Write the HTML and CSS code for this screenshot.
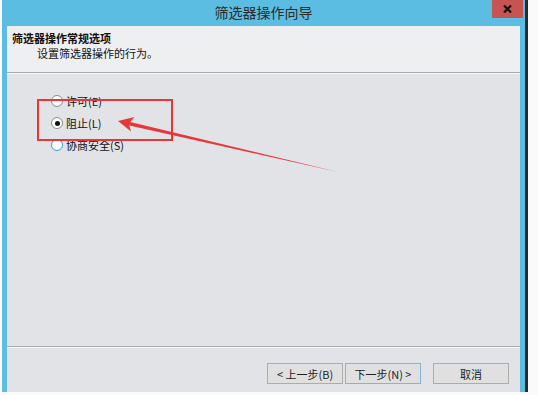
FILE: index.html
```html
<!DOCTYPE html>
<html lang="zh-CN">
<head>
    <meta charset="UTF-8">
    <title>筛选器操作向导</title>
    <link rel="stylesheet" href="styles.css">
</head>
<body>
    <div class="window">
        <div class="titlebar">
            <span class="title">筛选器操作向导</span>
            <div class="close">
                <svg width="9" height="8" viewBox="0 0 9 8"><path d="M1 0.5 L8 7.5 M8 0.5 L1 7.5" stroke="#111" stroke-width="2.2"/></svg>
            </div>
        </div>
        <div class="content">
            <div class="header">
                <div class="header-title">筛选器操作常规选项</div>
                <div class="header-sub">设置筛选器操作的行为。</div>
            </div>
            <div class="options">
                <label class="radio"><span class="dot"></span>许可(E)</label>
                <label class="radio checked"><span class="dot"></span>阻止(L)</label>
                <label class="radio hover"><span class="dot"></span>协商安全(S)</label>
            </div>
            <div class="footer">
                <button class="btn">&lt; 上一步(B)</button>
                <button class="btn default">下一步(N) &gt;</button>
                <button class="btn cancel">取消</button>
            </div>
        </div>
    </div>
    <svg class="mark" width="538" height="395" viewBox="0 0 538 395">
        <rect x="38" y="100" width="134" height="40" fill="none" stroke="#e8373b" stroke-width="2"/>
        <polygon points="118,121 134.5,117 130.2,121.9 338,172 129.3,125.6 131,131.5" fill="#e8373b"/>
    </svg>
</body>
</html>
```

FILE: styles.css
```css
body { margin: 0; width: 538px; height: 395px; background: #fafafa; position: relative; overflow: hidden; font-family: "Noto Sans CJK SC", "DejaVu Sans", sans-serif; color: #111; }
.window { margin-left: 2px; width: 523px; height: 392px; box-sizing: border-box; padding: 0 5px 0 5px; background: #5bbde1; box-shadow: 3px 0 0 #2a2a2a; display: flex; flex-direction: column; }
.titlebar { height: 26px; position: relative; display: flex; align-items: center; justify-content: center; }
.title { font-size: 14px; color: #2b2b2b; margin-top: -2px; }
.close { position: absolute; top: 0; right: -3px; width: 31px; height: 18px; background: #c75352; display: flex; align-items: center; justify-content: center; }
.content { flex: 1; background: #e2e3e6; display: flex; flex-direction: column; }
.header { height: 41px; padding: 5px 0 0 5px; background: #eeeff1; border-bottom: 1px solid #a8aaad; box-shadow: 0 1px 0 #f7f7f7; font-size: 11px; line-height: 15px; }
.header-title { font-weight: bold; }
.header-sub { padding-left: 25px; }
.options { flex: 1; padding: 17px 0 0 44px; display: flex; flex-direction: column; font-size: 11px; }
.radio { height: 22px; display: flex; align-items: center; gap: 3px; }
.dot { width: 10px; height: 10px; border: 1px solid #8a8a8a; border-radius: 50%; background: #fff; display: flex; align-items: center; justify-content: center; }
.checked .dot::after { content: ""; width: 5px; height: 5px; border-radius: 50%; background: #111; }
.hover .dot { border-color: #3a9ad9; }
.footer { height: 46px; border-top: 1px solid #aeb0b3; box-shadow: inset 0 1px 0 #f4f4f4; box-sizing: border-box; padding: 16px 11px 0 0; display: flex; justify-content: flex-end; align-items: flex-start; gap: 2px; }
.btn { width: 76px; height: 21px; padding: 0; background: #e0e0e0; border: 1px solid #acacac; font-family: inherit; font-size: 11px; color: #222; }
.btn.default { border-color: #86b3dc; }
.btn.cancel { margin-left: 10px; }
.mark { position: absolute; top: 0; left: 0; pointer-events: none; }
```
